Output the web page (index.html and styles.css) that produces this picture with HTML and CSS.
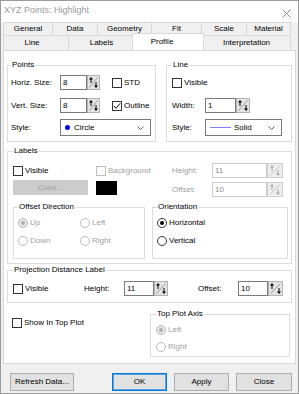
FILE: index.html
```html
<!DOCTYPE html>
<html lang="en">
<head>
  <meta charset="UTF-8" />
  <title>XYZ Points: Highlight</title>
  <link rel="stylesheet" href="styles.css">
</head>
<body>
  <div class="dialog">
    <div class="titlebar">
      <span class="title">XYZ Points: Highlight</span>
      <svg class="close-x" width="9" height="9" viewBox="0 0 9 9"><path d="M0.5 0.5 L8.5 8.5 M8.5 0.5 L0.5 8.5" stroke="#8c8c8c" stroke-width="1"/></svg>
    </div>

    <div class="tabs">
      <div class="tab-row">
        <div class="tab t-general">General</div>
        <div class="tab t-data">Data</div>
        <div class="tab t-geometry">Geometry</div>
        <div class="tab t-fit">Fit</div>
        <div class="tab t-scale">Scale</div>
        <div class="tab t-material">Material</div>
      </div>
      <div class="tab-row front">
        <div class="tab t-line">Line</div>
        <div class="tab t-labels">Labels</div>
        <div class="tab t-profile active">Profile</div>
        <div class="tab t-interp">Interpretation</div>
      </div>
    </div>

    <div class="panel">
      <div class="top-groups">
        <fieldset class="group points">
          <legend>Points</legend>
          <div class="row">
            <span class="lbl pt-lbl">Horiz. Size:</span>
            <span class="field pt-field">8</span>
            <span class="spin"><svg width="13" height="15" viewBox="0 0 13 15"><rect x="0.5" y="0.5" width="12" height="14" fill="#e4e4e4" stroke="#b4b4b4"/><path d="M2.5 12.5 L10.5 2.5" stroke="#9a9a9a"/><path d="M4 8 V4" stroke="#000"/><path d="M2 4.5 L4 2 L6 4.5 Z" fill="#000"/><path d="M9 7 V11" stroke="#000"/><path d="M7 10.5 L9 13 L11 10.5 Z" fill="#000"/></svg></span>
            <span class="check pt-check"><span class="box"></span>STD</span>
          </div>
          <div class="row">
            <span class="lbl pt-lbl">Vert. Size:</span>
            <span class="field pt-field">8</span>
            <span class="spin"><svg width="13" height="15" viewBox="0 0 13 15"><rect x="0.5" y="0.5" width="12" height="14" fill="#e4e4e4" stroke="#b4b4b4"/><path d="M2.5 12.5 L10.5 2.5" stroke="#9a9a9a"/><path d="M4 8 V4" stroke="#000"/><path d="M2 4.5 L4 2 L6 4.5 Z" fill="#000"/><path d="M9 7 V11" stroke="#000"/><path d="M7 10.5 L9 13 L11 10.5 Z" fill="#000"/></svg></span>
            <span class="check pt-check"><span class="box"><svg width="8" height="8" viewBox="0 0 8 8"><path d="M0.8 4 L3 6.3 L7.2 1.3" stroke="#000" fill="none" stroke-width="1"/></svg></span>Outline</span>
          </div>
          <div class="row row-select">
            <span class="lbl pt-lbl">Style:</span>
            <span class="select pt-select">
              <span class="dot"></span>Circle
              <svg class="chev" width="7" height="4" viewBox="0 0 7 4"><path d="M0.5 0.5 L3.5 3.5 L6.5 0.5" stroke="#666" fill="none"/></svg>
            </span>
          </div>
        </fieldset>

        <fieldset class="group line">
          <legend>Line</legend>
          <div class="row">
            <span class="check"><span class="box"></span>Visible</span>
          </div>
          <div class="row">
            <span class="lbl ln-lbl">Width:</span>
            <span class="field ln-field">1</span>
            <span class="spin"><svg width="14" height="15" viewBox="0 0 14 15"><rect x="0.5" y="0.5" width="13" height="14" fill="#e4e4e4" stroke="#b4b4b4"/><path d="M2.5 12.5 L11.5 2.5" stroke="#9a9a9a"/><path d="M4 8 V4" stroke="#000"/><path d="M2 4.5 L4 2 L6 4.5 Z" fill="#000"/><path d="M10 7 V11" stroke="#000"/><path d="M8 10.5 L10 13 L12 10.5 Z" fill="#000"/></svg></span>
          </div>
          <div class="row row-select">
            <span class="lbl ln-lbl">Style:</span>
            <span class="select ln-select">
              <span class="dash"></span>Solid
              <svg class="chev" width="7" height="4" viewBox="0 0 7 4"><path d="M0.5 0.5 L3.5 3.5 L6.5 0.5" stroke="#666" fill="none"/></svg>
            </span>
          </div>
        </fieldset>
      </div>

      <fieldset class="group labels">
        <legend>Labels</legend>
        <div class="labels-grid">
          <span class="check"><span class="box"></span>Visible</span>
          <span class="check disabled"><span class="box"></span>Background</span>
          <span class="lbl disabled">Height:</span>
          <span class="field off">11</span>
          <span class="spin"><svg width="16" height="15" viewBox="0 0 16 15"><rect x="0.5" y="0.5" width="15" height="14" fill="#efefef" stroke="#cfcfcf"/><path d="M3 12.5 L13 2.5" stroke="#c4c4c4"/><path d="M5 8 V4" stroke="#a6a6a6"/><path d="M3 4.5 L5 2 L7 4.5 Z" fill="#a6a6a6"/><path d="M11 7 V11" stroke="#a6a6a6"/><path d="M9 10.5 L11 13 L13 10.5 Z" fill="#a6a6a6"/></svg></span>

          <span class="color-btn">Color...</span>
          <span class="swatch"></span>
          <span class="lbl disabled">Offset:</span>
          <span class="field off">10</span>
          <span class="spin"><svg width="16" height="15" viewBox="0 0 16 15"><rect x="0.5" y="0.5" width="15" height="14" fill="#efefef" stroke="#cfcfcf"/><path d="M3 12.5 L13 2.5" stroke="#c4c4c4"/><path d="M5 8 V4" stroke="#a6a6a6"/><path d="M3 4.5 L5 2 L7 4.5 Z" fill="#a6a6a6"/><path d="M11 7 V11" stroke="#a6a6a6"/><path d="M9 10.5 L11 13 L13 10.5 Z" fill="#a6a6a6"/></svg></span>
        </div>

        <div class="sub-groups">
          <fieldset class="group offset-dir">
            <legend>Offset Direction</legend>
            <div class="radio-grid">
              <span class="radio disabled"><span class="ring on"></span>Up</span>
              <span class="radio disabled"><span class="ring"></span>Left</span>
              <span class="radio disabled"><span class="ring"></span>Down</span>
              <span class="radio disabled"><span class="ring"></span>Right</span>
            </div>
          </fieldset>
          <fieldset class="group orientation">
            <legend>Orientation</legend>
            <div class="radio-list">
              <span class="radio"><span class="ring on"></span>Horizontal</span>
              <span class="radio"><span class="ring"></span>Vertical</span>
            </div>
          </fieldset>
        </div>
      </fieldset>

      <fieldset class="group projection">
        <legend>Projection Distance Label</legend>
        <div class="row">
          <span class="check pr-check"><span class="box"></span>Visible</span>
          <span class="lbl pr-lbl">Height:</span>
          <span class="field pr-field">11</span>
          <span class="spin"><svg width="14" height="15" viewBox="0 0 14 15"><rect x="0.5" y="0.5" width="13" height="14" fill="#e4e4e4" stroke="#b4b4b4"/><path d="M2.5 12.5 L11.5 2.5" stroke="#9a9a9a"/><path d="M4 8 V4" stroke="#000"/><path d="M2 4.5 L4 2 L6 4.5 Z" fill="#000"/><path d="M10 7 V11" stroke="#000"/><path d="M8 10.5 L10 13 L12 10.5 Z" fill="#000"/></svg></span>
          <span class="lbl pr-lbl pr-offset">Offset:</span>
          <span class="field pr-field">10</span>
          <span class="spin"><svg width="15" height="15" viewBox="0 0 15 15"><rect x="0.5" y="0.5" width="14" height="14" fill="#e4e4e4" stroke="#b4b4b4"/><path d="M2.5 12.5 L12.5 2.5" stroke="#9a9a9a"/><path d="M4 8 V4" stroke="#000"/><path d="M2 4.5 L4 2 L6 4.5 Z" fill="#000"/><path d="M11 7 V11" stroke="#000"/><path d="M9 10.5 L11 13 L13 10.5 Z" fill="#000"/></svg></span>
        </div>
      </fieldset>

      <div class="bottom-row">
        <span class="check top-plot"><span class="box"></span>Show In Top Plot</span>
        <fieldset class="group top-axis">
          <legend>Top Plot Axis</legend>
          <div class="radio-list">
            <span class="radio disabled"><span class="ring on"></span>Left</span>
            <span class="radio disabled"><span class="ring"></span>Right</span>
          </div>
        </fieldset>
      </div>
    </div>

    <div class="buttons">
      <span class="btn refresh">Refresh Data...</span>
      <span class="btn ok">OK</span>
      <span class="btn">Apply</span>
      <span class="btn close">Close</span>
    </div>
  </div>
</body>
</html>
```

FILE: styles.css
```css
* {
  box-sizing: border-box;
}

html, body {
  margin: 0;
  padding: 0;
}

body {
  font-family: "Liberation Sans", Arial, sans-serif;
  font-size: 8px;
  line-height: 10px;
  color: #000;
  background: #fff;
}

.dialog {
  width: 299px;
  height: 394px;
  border: 1px solid #9b9b9b;
  background: #f0f0f0;
  display: flex;
  flex-direction: column;
}

/* title bar */
.titlebar {
  height: 21px;
  background: #fff;
  display: flex;
  align-items: flex-start;
  justify-content: space-between;
  padding: 4px 7px 0 3px;
}

.title {
  font-size: 9px;
  line-height: 11px;
  color: #999;
}

.close-x {
  margin-top: 4px;
}

/* tabs */
.tabs {
  padding-left: 2px;
}

.tab-row {
  display: flex;
  align-items: flex-start;
}

.tab {
  height: 13px;
  line-height: 12px;
  text-align: center;
  background: #f0f0f0;
  border-top: 1px solid #d9d9d9;
  border-left: 1px solid #d9d9d9;
}

.tab-row .tab:last-child {
  border-right: 1px solid #d9d9d9;
}

.front .tab {
  height: 14px;
  line-height: 13px;
}

.t-general { width: 49px; }
.t-data { width: 45px; }
.t-geometry { width: 54px; }
.t-fit { width: 50px; }
.t-scale { width: 45px; }
.t-material { width: 45px; }
.t-line { width: 65px; padding-right: 8px; }
.t-labels { width: 66px; }
.t-interp { width: 89px; }

.front .tab.active {
  position: relative;
  z-index: 1;
  width: 72px;
  height: 17px;
  margin: -2px -2px 0;
  padding-right: 12px;
  line-height: 15px;
  background: #fff;
  border-right: 1px solid #d9d9d9;
}

/* panel */
.panel {
  height: 314px;
  margin: 0 2px;
  padding: 9px 3px 0;
  background: #fff;
  border: 1px solid #d9d9d9;
}

.group {
  margin: 0;
  padding: 0;
  min-width: 0;
  border: 1px solid #dcdcdc;
}

.group legend {
  padding: 0 1px;
  line-height: 10px;
}

.row {
  display: flex;
  align-items: center;
  height: 15px;
}

.row + .row {
  margin-top: 8px;
}

.row + .row-select {
  height: 17px;
  margin-top: 6px;
}

.lbl {
  white-space: nowrap;
}

.field {
  height: 15px;
  padding-left: 2px;
  display: flex;
  align-items: center;
  background: #fff;
  border: 1px solid #7a7a7a;
}

.field.off {
  color: #8a8a8a;
  border-color: #cccccc;
}

.spin {
  display: flex;
}

.select {
  height: 17px;
  padding: 0 6px 0 4px;
  display: flex;
  align-items: center;
  background: #fff;
  border: 1px solid #7a7a7a;
}

.chev {
  margin-left: auto;
}

.dot {
  width: 5px;
  height: 5px;
  margin-right: 4px;
  border-radius: 50%;
  background: #0000ee;
}

.dash {
  width: 21px;
  height: 1px;
  margin: 0 3px 0 0;
  background: #8080ff;
}

/* check boxes and radios */
.check, .radio {
  display: inline-flex;
  align-items: center;
  white-space: nowrap;
}

.box, .ring {
  width: 10px;
  height: 10px;
  margin-right: 2px;
  display: inline-flex;
  align-items: center;
  justify-content: center;
  flex: none;
  background: #fff;
  border: 1px solid #333;
}

.ring {
  border-radius: 50%;
}

.ring.on::after {
  content: "";
  width: 4px;
  height: 4px;
  border-radius: 50%;
  background: #000;
}

.disabled {
  color: #a0a0a0;
}

.disabled .box,
.disabled .ring {
  border-color: #bcbcbc;
}

.disabled .ring.on {
  background: #e6e6e6;
}

.disabled .ring.on::after {
  background: #b0b0b0;
}

/* points + line */
.top-groups {
  display: flex;
  gap: 10px;
}

.points {
  width: 149px;
  padding: 5px 3px 5px;
}

.pt-lbl { width: 49px; }
.pt-field { width: 27px; }
.pt-check { margin-left: 12px; }
.pt-select { width: 91px; }

.line {
  flex: 1;
  padding: 5px 5px 5px;
}

.ln-lbl { width: 33px; }
.ln-field { width: 31px; }
.ln-select { width: 77px; }

/* labels */
.labels {
  margin-top: 4px;
  padding: 7px 3px 4px 5px;
}

.labels-grid {
  display: grid;
  grid-template-columns: 83px 76px 40px 55px 16px;
  grid-template-rows: 15px 15px;
  row-gap: 4px;
  align-items: center;
}

.color-btn {
  width: 75px;
  height: 15px;
  margin-top: -4px;
  display: flex;
  align-items: center;
  justify-content: center;
  color: #a0a0a0;
  background: #cccccc;
}

.swatch {
  width: 21px;
  height: 14px;
  margin-top: -3px;
  background: #000;
}

.sub-groups {
  display: flex;
  gap: 7px;
  margin-top: 5px;
}

.offset-dir {
  width: 132px;
  padding: 5px 3px 11px 4px;
}

.orientation {
  flex: 1;
  padding: 5px 3px 11px 4px;
}

.radio-grid {
  display: grid;
  grid-template-columns: 62px auto;
  grid-auto-rows: 12px;
  row-gap: 6px;
  align-items: center;
}

.radio-list {
  display: grid;
  grid-auto-rows: 12px;
  row-gap: 6px;
  align-items: center;
}

/* projection */
.projection {
  margin-top: 1px;
  padding: 6px 3px 6px 5px;
}

.pr-check { width: 71px; }
.pr-lbl { width: 40px; }
.pr-field { width: 30px; }
.pr-offset { margin-left: 30px; }

/* show in top plot + axis */
.bottom-row {
  display: flex;
  align-items: flex-start;
  margin-top: 6px;
}

.top-plot {
  margin: 9px 0 0 5px;
}

.top-axis {
  width: 140px;
  margin-left: auto;
  margin-right: 2px;
  padding: 5px 4px 3px 5px;
}

.top-axis .radio-list {
  row-gap: 5px;
}

/* buttons */
.buttons {
  display: flex;
  gap: 7px;
  margin-top: 9px;
  padding-left: 9px;
}

.btn {
  width: 55px;
  height: 18px;
  display: flex;
  align-items: center;
  justify-content: center;
  background: #e1e1e1;
  border: 1px solid #adadad;
}

.btn.refresh {
  width: 64px;
  margin-right: 31px;
}

.btn.ok {
  border-color: #0078d7;
  box-shadow: inset 0 0 0 1px #5fa3e0;
}

.btn.close {
  width: 56px;
}
```
